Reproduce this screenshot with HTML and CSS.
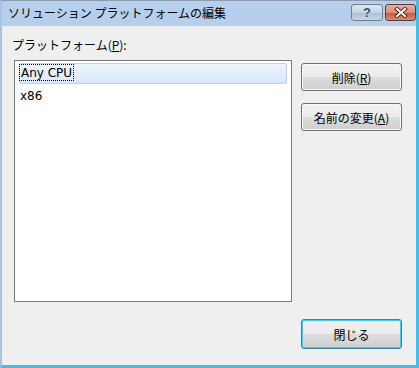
FILE: index.html
```html
<!DOCTYPE html>
<html lang="ja">
<head>
    <meta charset="UTF-8">
    <title>ソリューション プラットフォームの編集</title>
    <link rel="stylesheet" href="styles.css">
</head>
<body>
    <div class="window">
        <div class="titlebar">
            <span class="title">ソリューション プラットフォームの編集</span>
            <div class="caption-buttons">
                <button class="cap-btn help">?</button>
                <button class="cap-btn close">
                    <svg width="14" height="11" viewBox="0 0 14 11">
                        <path d="M3 2 L11 9 M11 2 L3 9" stroke="#5a2a20" stroke-width="4" stroke-linecap="square"/>
                        <path d="M3 2 L11 9 M11 2 L3 9" stroke="#ffffff" stroke-width="2" stroke-linecap="square"/>
                    </svg>
                </button>
            </div>
        </div>

        <div class="content">
            <div class="left-col">
                <label class="list-label">プラットフォーム(<u>P</u>):</label>
                <ul class="listbox">
                    <li class="item selected"><span class="focus">Any CPU</span></li>
                    <li class="item">x86</li>
                </ul>
            </div>
            <div class="right-col">
                <div class="actions">
                    <button class="btn">削除(<u>R</u>)</button>
                    <button class="btn">名前の変更(<u>A</u>)</button>
                </div>
                <button class="btn default">閉じる</button>
            </div>
        </div>
    </div>
</body>
</html>
```

FILE: styles.css
```css
body {
    margin: 0;
    background: #ffffff;
    font-family: "Noto Sans CJK JP", "Liberation Sans", sans-serif;
    font-size: 12px;
    color: #000;
}

.window {
    width: 419px;
    height: 368px;
    box-sizing: border-box;
    display: flex;
    flex-direction: column;
    background: #efefef;
    border-top: 1px solid #8c9cb0;
    border-left: 2px solid #a8c4e4;
    border-right: 3px solid #44bce8;
    border-bottom: 3px solid #44bce8;
}

.titlebar {
    height: 25px;
    display: flex;
    align-items: center;
    justify-content: space-between;
    background: #b6cfec;
    padding-left: 6px;
}

.title {
    font-size: 12px;
    line-height: 14px;
    margin-top: -2px;
}

.caption-buttons {
    display: flex;
    gap: 2px;
    align-self: flex-start;
    margin-top: 3px;
}

.cap-btn {
    width: 32px;
    height: 17px;
    padding: 0;
    border: 1px solid #6e7e90;
    border-radius: 3px;
    display: flex;
    align-items: center;
    justify-content: center;
    font-family: "Liberation Sans", sans-serif;
    font-weight: bold;
    font-size: 13px;
}

.cap-btn.help {
    background: linear-gradient(#dbe8f2, #c0d4e4 50%, #a8c0d4 51%, #c4d8e8);
    color: #3a4a5a;
    text-shadow: 0 0 1px #fff;
}

.cap-btn.close {
    width: 31px;
    border-color: #5a3a38;
    background: linear-gradient(#eab0a0, #dc8c78 50%, #c8583c 51%, #dc8870);
}

.content {
    flex: 1;
    display: flex;
    padding: 12px 12px 0 10px;
    gap: 9px;
}

.left-col {
    display: flex;
    flex-direction: column;
}

.list-label {
    line-height: 14px;
    margin-bottom: 8px;
}

.listbox {
    width: 268px;
    height: 236px;
    margin: 0 0 0 2px;
    padding: 2px 4px;
    list-style: none;
    background: #ffffff;
    border: 1px solid #7a7a7a;
}

.item {
    height: 21px;
    line-height: 21px;
    padding-left: 1px;
    font-family: "DejaVu Sans", sans-serif;
    font-size: 12px;
}

.item.selected {
    background: linear-gradient(#eef5fd, #d8e8fa);
    border: 1px solid #b8d4f2;
    border-radius: 2px;
    height: 19px;
    line-height: 19px;
    padding-left: 0;
    margin-bottom: 2px;
}

.focus {
    outline: 1px dotted #000;
    padding: 1px 1px 0;
}

.right-col {
    flex: 1;
    display: flex;
    flex-direction: column;
    justify-content: space-between;
    padding-top: 25px;
    padding-bottom: 16px;
}

.actions {
    display: flex;
    flex-direction: column;
    gap: 12px;
}

.btn {
    width: 101px;
    height: 28px;
    font-family: "Noto Sans CJK JP", sans-serif;
    font-size: 12px;
    border: 1px solid #707070;
    border-radius: 3px;
    background: linear-gradient(#f2f2f2, #ebebeb 50%, #dddddd 51%, #cfcfcf);
    box-shadow: inset 0 0 0 1px #fbfbfb;
    padding: 0;
}

.btn.default {
    height: 30px;
    border-color: #3c7fb1;
    box-shadow: inset 0 0 0 1px #48c8f0;
}
```
